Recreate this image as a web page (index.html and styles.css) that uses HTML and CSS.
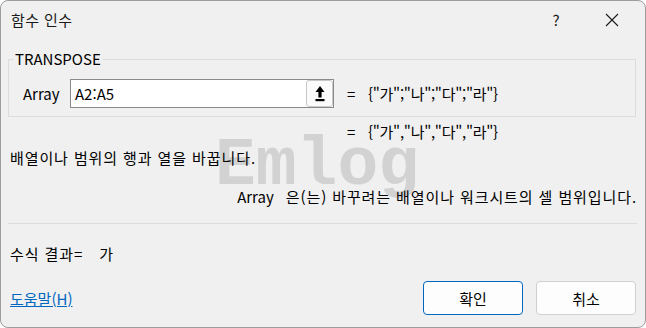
FILE: index.html
```html
<!DOCTYPE html>
<html lang="ko">
<head>
    <meta charset="UTF-8">
    <title>함수 인수</title>
    <link rel="stylesheet" href="styles.css">
</head>
<body>
    <div class="dialog">
        <div class="titlebar">
            <span class="title">함수 인수</span>
            <div class="controls">
                <span class="ctl help">?</span>
                <span class="ctl close">
                    <svg width="14" height="14" viewBox="0 0 14 14"><path d="M1 1 L13 13 M13 1 L1 13" stroke="#1a1a1a" stroke-width="1.1" fill="none"/></svg>
                </span>
            </div>
        </div>

        <fieldset class="group">
            <legend>TRANSPOSE</legend>
            <div class="arg-row">
                <label class="arg-name">Array</label>
                <div class="ref-input">
                    <span class="ref-text">A2:A5</span>
                    <button class="collapse">
                        <svg width="10" height="17" viewBox="0 0 10 17"><path d="M5 1 L9.5 7 H6.6 V12.5 H3.4 V7 H0.5 Z" fill="#000"/><rect x="0.5" y="14" width="9" height="2.2" fill="#000"/></svg>
                    </button>
                </div>
                <span class="eq">=</span>
                <span class="val">{"가";"나";"다";"라"}</span>
            </div>
        </fieldset>

        <div class="result-row">
            <span class="eq">=</span>
            <span class="val">{"가","나","다","라"}</span>
        </div>
        <p class="desc ko">배열이나 범위의 행과 열을 바꿉니다.</p>
        <p class="arg-desc"><span class="arg-label">Array</span><span class="ko">은(는) 바꾸려는 배열이나 워크시트의 셀 범위입니다.</span></p>
        <div class="sep"></div>
        <p class="formula ko">수식 결과=<span class="formula-val">가</span></p>

        <div class="footer">
            <a href="#" class="help-link">도움말(H)</a>
            <div class="buttons">
                <button class="btn primary">확인</button>
                <button class="btn">취소</button>
            </div>
        </div>

        <div class="watermark">Emlog</div>
    </div>
</body>
</html>
```

FILE: styles.css
```css
body {
    margin: 0;
    font-family: "Noto Sans CJK KR", "Noto Sans", sans-serif;
    font-size: 15px;
    color: #000;
    background: #fff;
}
.ko {
    letter-spacing: 0.9px;
}
.dialog {
    width: 646px;
    height: 328px;
    box-sizing: border-box;
    border: 1px solid #9c9c9c;
    border-radius: 8px;
    background: #f0f0f0;
    position: relative;
    z-index: 0;
    overflow: hidden;
}
.titlebar {
    height: 37px;
    display: flex;
    align-items: center;
    padding-left: 10px;
}
.title {
    color: #1a1a1a;
    line-height: 20px;
    letter-spacing: 0.4px;
}
.controls {
    margin-left: auto;
    display: flex;
    gap: 8px;
    margin-right: 10px;
}
.ctl {
    width: 46px;
    height: 30px;
    display: flex;
    align-items: center;
    justify-content: center;
    color: #1a1a1a;
}
.help {
    padding-right: 4px;
    box-sizing: border-box;
}
.group {
    margin: 11px 9px 0 7px;
    padding: 0 0 8px 0;
    border: 1px solid #dcdcdc;
    min-width: 0;
}
.group legend {
    margin-left: 4px;
    padding: 0 2px;
    line-height: 20px;
}
.arg-row {
    display: flex;
    align-items: center;
    margin-top: 10px;
    padding-left: 14px;
}
.arg-name {
    width: 47px;
}
.ref-input {
    width: 264px;
    height: 29px;
    box-sizing: border-box;
    border: 1px solid #8a8a8a;
    background: #fff;
    display: flex;
    align-items: center;
}
.ref-text {
    padding-left: 4px;
    flex: 1;
}
.collapse {
    width: 27px;
    height: 27px;
    padding: 0;
    border: 1px solid #c8c8c8;
    border-radius: 3px;
    background: #fbfbfb;
    display: flex;
    align-items: center;
    justify-content: center;
}
.eq {
    margin-left: 13px;
    width: 21px;
}
.val {
    letter-spacing: -0.3px;
}
.result-row {
    display: flex;
    margin-top: 5px;
    padding-left: 333px;
    line-height: 20px;
}
.desc {
    margin: 6px 0 0;
    padding-left: 9px;
    line-height: 20px;
}
.arg-desc {
    margin: 19px 0 0;
    padding-right: 8px;
    text-align: right;
    line-height: 20px;
}
.arg-label {
    margin-right: 12px;
}
.sep {
    margin: 16px 8px 0 7px;
    border-top: 1px solid #dcdcdc;
}
.formula {
    margin: 20px 0 0;
    padding-left: 9px;
    line-height: 20px;
}
.formula-val {
    margin-left: 16px;
}
.footer {
    display: flex;
    align-items: center;
    margin-top: 17px;
    padding: 0 9px;
}
.help-link {
    color: #0067c0;
    text-decoration: underline;
}
.buttons {
    margin-left: auto;
    display: flex;
    gap: 13px;
}
.btn {
    width: 100px;
    height: 34px;
    font-family: inherit;
    font-size: 15px;
    color: #000;
    background: #fdfdfd;
    border: 1px solid #d0d0d0;
    border-radius: 4px;
}
.btn.primary {
    border-color: #0067c0;
}
.watermark {
    position: absolute;
    left: 214px;
    top: 131px;
    z-index: -1;
    font-family: "Liberation Mono", monospace;
    font-weight: bold;
    font-size: 68px;
    line-height: 1;
    color: #d2d2d2;
}
```
